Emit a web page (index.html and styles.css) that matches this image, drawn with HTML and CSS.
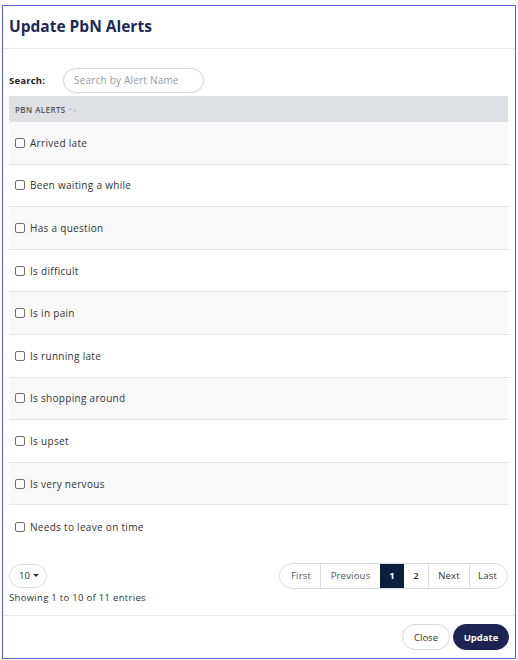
FILE: index.html
```html
<!DOCTYPE html>
<html>
<head>
<meta charset="utf-8">
<link rel="stylesheet" href="styles.css">
</head>
<body>
<div class="modal">
  <div class="modal-header"><h1 class="title">Update PbN Alerts</h1></div>
  <div class="modal-body">
    <div class="search-row">
      <label class="search-label">Search:</label>
      <input class="search-input" type="text" placeholder="Search by Alert Name">
    </div>
    <div class="table">
      <div class="thead">PBN ALERTS <span class="sort"><span class="down">▼</span><span class="up">▲</span></span></div>
      <div class="row odd"><span class="cb"></span>Arrived late</div>
      <div class="row"><span class="cb"></span>Been waiting a while</div>
      <div class="row odd"><span class="cb"></span>Has a question</div>
      <div class="row"><span class="cb"></span>Is difficult</div>
      <div class="row odd"><span class="cb"></span>Is in pain</div>
      <div class="row"><span class="cb"></span>Is running late</div>
      <div class="row odd"><span class="cb"></span>Is shopping around</div>
      <div class="row"><span class="cb"></span>Is upset</div>
      <div class="row odd"><span class="cb"></span>Is very nervous</div>
      <div class="row last"><span class="cb"></span>Needs to leave on time</div>
    </div>
    <div class="table-footer">
      <div class="left">
        <div class="length">10 <span class="caret"></span></div>
        <div class="info">Showing 1 to 10 of 11 entries</div>
      </div>
      <div class="pager">
        <span class="pg pg-first">First</span>
        <span class="pg pg-prev">Previous</span>
        <span class="pg pg-num active">1</span>
        <span class="pg pg-num pg-two">2</span>
        <span class="pg pg-next">Next</span>
        <span class="pg pg-last">Last</span>
      </div>
    </div>
  </div>
  <div class="modal-footer">
    <button class="btn btn-close">Close</button>
    <button class="btn btn-primary">Update</button>
  </div>
</div>
</body>
</html>
```
FILE: styles.css
```css
html, body { margin: 0; padding: 0; background: #fff; }
body { font-family: "Open Sans", "DejaVu Sans", sans-serif; color: #333; }
.modal {
  margin: 5px 2px 1px 2px;
  border: 1px solid #5a63d3;
  display: flex;
  flex-direction: column;
  box-sizing: border-box;
  height: 654px;
}
.modal-header {
  height: 43px;
  border-bottom: 1px solid #e9e9ec;
  display: flex;
  align-items: center;
  padding-left: 6px;
  padding-bottom: 3px;
  box-sizing: border-box;
}
.title {
  margin: 0;
  font-size: 15.5px;
  font-weight: 700;
  color: #1d2a57;
}
.modal-body { padding: 18px 6px 0 6px; flex: 1; display: flex; flex-direction: column; }
.search-row { display: flex; align-items: center; height: 26px; margin-bottom: 3px; }
.search-label { font-size: 9.5px; font-weight: 700; color: #222; width: 54px; letter-spacing: 0.2px; }
.search-input {
  width: 141px; height: 25px; box-sizing: border-box;
  border: 1px solid #d4d4d8; border-radius: 13px;
  padding: 0 10px; font-family: inherit; font-size: 10px; outline: none; letter-spacing: 0.2px;
}
.search-input::placeholder { color: #9a9aa2; }
.table { display: flex; flex-direction: column; margin-right: 1px; }
.thead {
  height: 26px; background: #dfe0e4; display: flex; align-items: center;
  padding-left: 6px; font-size: 8px; font-weight: 600; color: #555; letter-spacing: 0.4px;
}
.sort { margin-left: 3px; font-size: 4px; color: #c2c3c8; display: inline-flex; gap: 1px; }
.row {
  height: 42.6px; box-sizing: border-box; border-bottom: 1px solid #e4e4e6;
  display: flex; align-items: center; padding-left: 6px;
  font-size: 10px; color: #333; letter-spacing: 0.3px;
}
.row.odd { background: #f9f9f9; }
.row.last { border-bottom: none; }
.cb {
  width: 10px; height: 10px; border: 1px solid #6f6f6f; border-radius: 2px;
  margin-right: 5px; box-sizing: border-box; background: #fff;
}
.table-footer { display: flex; justify-content: space-between; align-items: flex-start; margin-top: 16px; margin-right: 1px; }
.left { display: flex; flex-direction: column; }
.length {
  width: 38px; height: 24px; box-sizing: border-box; border: 1px solid #dcdce0; border-radius: 12px;
  display: flex; align-items: center; padding-left: 9px; font-size: 9.5px; color: #333;
}
.caret {
  width: 0; height: 0; border-left: 3px solid transparent; border-right: 3px solid transparent;
  border-top: 3px solid #333; margin-left: 3px;
}
.info { font-size: 9.5px; color: #333; margin-top: 3px; letter-spacing: 0.3px; }
.pager {
  display: flex; height: 26px; box-sizing: border-box; border: 1px solid #dcdce0;
  border-radius: 13px; overflow: hidden; margin-top: -1px;
}
.pg {
  display: flex; align-items: center; justify-content: center; font-size: 9.5px; color: #333;
  border-left: 1px solid #dcdce0; letter-spacing: 0.2px; box-sizing: border-box;
}
.pg-first { border-left: none; width: 40px; color: #555; padding-left: 2px; }
.pg-prev { width: 60px; color: #555; }
.pg-num { width: 24px; }
.pg-next { width: 41px; }
.pg-last { width: 38px; padding-right: 2px; }
.pg.active { background: #0b1d3d; color: #fff; font-weight: 700; border-left: none; }
.pg-two { border-left: none; font-weight: 600; }
.modal-footer {
  border-top: 1px solid #e9e9ec; height: 42px; display: flex; justify-content: flex-end;
  align-items: center; gap: 3px; padding-right: 6px;
}
.btn { font-family: inherit; height: 26px; border-radius: 13px; font-size: 9.5px; cursor: pointer; }
.btn-close { background: #fff; border: 1px solid #d8d8dc; color: #333; width: 48px; }
.btn-primary { background: #1b2452; border: 1px solid #1b2452; color: #fff; font-weight: 700; width: 56px; }
```
